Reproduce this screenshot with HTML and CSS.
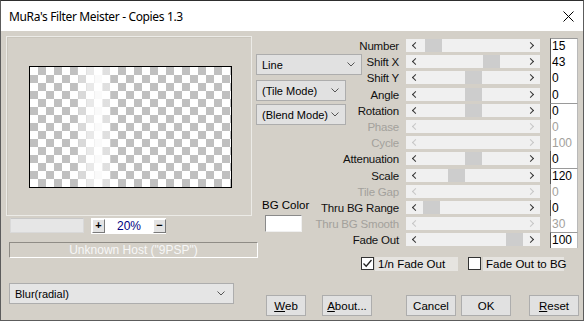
FILE: index.html
```html
<!DOCTYPE html>
<html>
<head>
<meta charset="utf-8">
<link rel="stylesheet" href="styles.css">
</head>
<body>
<div class="window">
  <div class="titlebar">
    <span class="title">MuRa's Filter Meister - Copies 1.3</span>
    <svg class="close" width="11" height="11" viewBox="0 0 11 11"><path d="M0.5 0.5L10.5 10.5M10.5 0.5L0.5 10.5" stroke="#000" stroke-width="1" fill="none"/></svg>
  </div>
  <div class="client">
    <div class="left">
      <div class="frame"><div class="preview"></div></div>
      <div class="zoomrow">
        <div class="progress"></div>
        <div class="zoombox"><span class="zbtn">+</span><span class="zval">20%</span><span class="zbtn">&minus;</span></div>
      </div>
      <div class="host">Unknown Host ("9PSP")</div>
      <div class="combo combo-filter"><span>Blur(radial)</span><svg class="chev" width="8" height="5" viewBox="0 0 8 5"><path d="M0.5 0.5L4 4L7.5 0.5" stroke="#555" fill="none"/></svg></div>
    </div>
    <div class="right">
      <div class="params">
        <div class="mid">
          <div class="combo combo-line"><span>Line</span><svg class="chev" width="8" height="5" viewBox="0 0 8 5"><path d="M0.5 0.5L4 4L7.5 0.5" stroke="#555" fill="none"/></svg></div>
          <div class="combo combo-tile"><span>(Tile Mode)</span><svg class="chev" width="8" height="5" viewBox="0 0 8 5"><path d="M0.5 0.5L4 4L7.5 0.5" stroke="#555" fill="none"/></svg></div>
          <div class="combo combo-blend"><span>(Blend Mode)</span><svg class="chev" width="8" height="5" viewBox="0 0 8 5"><path d="M0.5 0.5L4 4L7.5 0.5" stroke="#555" fill="none"/></svg></div>
          <div class="bglabel">BG Color</div>
          <div class="bgbox"></div>
        </div>
        <div class="rows">
          <div class="lbl">Number</div>
          <div class="cell"><div class="track"><span class="arr"></span><span class="chan"><span class="thumb" style="left:2px"></span></span><span class="arr"></span></div></div>
          <div class="box top">15</div>

          <div class="lbl">Shift X</div>
          <div class="cell"><div class="track"><span class="arr"></span><span class="chan"><span class="thumb" style="left:60px"></span></span><span class="arr"></span></div></div>
          <div class="box">43</div>

          <div class="lbl">Shift Y</div>
          <div class="cell"><div class="track"><span class="arr"></span><span class="chan"><span class="thumb" style="left:42px"></span></span><span class="arr"></span></div></div>
          <div class="box">0</div>

          <div class="lbl">Angle</div>
          <div class="cell"><div class="track"><span class="arr"></span><span class="chan"><span class="thumb" style="left:42px"></span></span><span class="arr"></span></div></div>
          <div class="box">0</div>

          <div class="lbl">Rotation</div>
          <div class="cell"><div class="track"><span class="arr"></span><span class="chan"><span class="thumb" style="left:42px"></span></span><span class="arr"></span></div></div>
          <div class="box top">0</div>

          <div class="lbl dis">Phase</div>
          <div class="cell"><div class="track dis"><span class="arr"></span><span class="chan"></span><span class="arr"></span></div></div>
          <div class="box dis">0</div>

          <div class="lbl dis">Cycle</div>
          <div class="cell"><div class="track dis"><span class="arr"></span><span class="chan"></span><span class="arr"></span></div></div>
          <div class="box dis">100</div>

          <div class="lbl">Attenuation</div>
          <div class="cell"><div class="track"><span class="arr"></span><span class="chan"><span class="thumb" style="left:42px"></span></span><span class="arr"></span></div></div>
          <div class="box">0</div>

          <div class="lbl">Scale</div>
          <div class="cell"><div class="track"><span class="arr"></span><span class="chan"><span class="thumb" style="left:25px"></span></span><span class="arr"></span></div></div>
          <div class="box top">120</div>

          <div class="lbl dis">Tile Gap</div>
          <div class="cell"><div class="track dis"><span class="arr"></span><span class="chan"></span><span class="arr"></span></div></div>
          <div class="box dis">0</div>

          <div class="lbl">Thru BG Range</div>
          <div class="cell"><div class="track"><span class="arr"></span><span class="chan"><span class="thumb" style="left:0px"></span></span><span class="arr"></span></div></div>
          <div class="box">0</div>

          <div class="lbl dis">Thru BG Smooth</div>
          <div class="cell"><div class="track dis"><span class="arr"></span><span class="chan"></span><span class="arr"></span></div></div>
          <div class="box dis">30</div>

          <div class="lbl">Fade Out</div>
          <div class="cell"><div class="track"><span class="arr"></span><span class="chan"><span class="thumb" style="left:83px"></span></span><span class="arr"></span></div></div>
          <div class="box top">100</div>
        </div>
      </div>
      <div class="checks">
        <label class="chk"><span class="cb"><svg width="11" height="11" viewBox="0 0 11 11"><path d="M1.5 5.5L4.2 8.2L9.5 2" stroke="#222" stroke-width="1.3" fill="none"/></svg></span><span class="ctext c1">1/n Fade Out</span></label>
        <label class="chk chk2"><span class="cb"></span><span class="ctext c2">Fade Out to BG</span></label>
      </div>
      <div class="buttons">
        <div class="btn b-web"><u>W</u>eb</div>
        <div class="btn b-about"><u>A</u>bout...</div>
        <div class="btn b-cancel">Cancel</div>
        <div class="btn b-ok">OK</div>
        <div class="btn b-reset"><u>R</u>eset</div>
      </div>
    </div>
  </div>
</div>
</body>
</html>
```
FILE: styles.css
```css
* { box-sizing: border-box; margin: 0; padding: 0; }
html, body { width: 584px; height: 321px; overflow: hidden; }
body {
  font-family: "Liberation Sans", Arial, sans-serif;
  font-size: 11px;
  color: #000;
  background: #d4d0c8;
}
.window {
  width: 584px;
  height: 321px;
  border: 1px solid #5c5c5c;
  border-top-color: #2e2e2e;
  background: #d4d0c8;
  display: flex;
  flex-direction: column;
}
.titlebar {
  height: 30px;
  flex: none;
  background: #fff;
  display: flex;
  align-items: center;
  justify-content: space-between;
  padding: 0 9px 0 8px;
}
.title {
  font-family: "Noto Sans", "Open Sans", sans-serif;
  font-size: 12px;
  color: #000;
  letter-spacing: -0.35px;
}
.close { display: block; margin-top: 1px; }

.client { flex: 1; display: flex; }

/* ---------- left ---------- */
.left { width: 255px; flex: none; display: flex; flex-direction: column; }
.frame {
  margin: 5px 0 0 5px;
  width: 246px;
  height: 180px;
  border: 1px solid #ecebe7;
  box-shadow: inset 1px 1px 0 #c9c5bc;
}
.preview {
  margin: 29px 0 0 22px;
  width: 203px;
  height: 122px;
  border: 1px solid #000;
  background:
    linear-gradient(90deg, rgba(255,255,255,0) 47px, rgba(255,255,255,.4) 49px, rgba(255,255,255,.4) 56px, rgba(255,255,255,.65) 57px, rgba(255,255,255,.65) 64px, rgba(255,255,255,.92) 65px, rgba(255,255,255,.92) 72px, rgba(255,255,255,.5) 73px, rgba(255,255,255,.5) 80px, rgba(255,255,255,0) 81px),
    repeating-conic-gradient(#c0c0c0 0 25%, #fff 0 50%) 0 0 / 16px 16px;
}
.zoomrow { display: flex; margin: 2px 0 0 9px; }
.progress {
  width: 74px; height: 15px;
  background: #e6e6e6;
  border: 1px solid #d9d9d9;
  border-top-color: #c8c8c8;
}
.zoombox {
  margin-left: 7px;
  width: 75px; height: 16px;
  background: #fff;
  display: flex;
  align-items: center;
  justify-content: space-between;
  padding: 0 0 0 1px;
}
.zbtn {
  width: 13px; height: 14px;
  background: #e3e3e3;
  border: 1px solid #fff;
  border-right-color: #7a7a7a;
  border-bottom-color: #7a7a7a;
  font-weight: bold;
  font-size: 11px;
  line-height: 11px;
  text-align: center;
}
.zval { color: #000080; font-size: 12px; }
.host {
  margin: 8px 0 0 8px;
  width: 249px; height: 16px;
  border: 1px solid #fff;
  border-top-color: #8f8c86;
  border-left-color: #8f8c86;
  color: #f7f7f7;
  text-align: center;
  font-size: 12px;
  line-height: 14px;
}
.combo {
  height: 21px;
  background: #e1e1e1;
  border: 1px solid #adadad;
  display: flex;
  align-items: center;
  justify-content: space-between;
  padding: 0 6px 0 5px;
  font-size: 11px;
  white-space: nowrap;
}
.chev { display: block; flex: none; }
.combo-filter { margin: 25px 0 0 8px; width: 225px; background: #e5e5e5; padding-right: 8px; }

/* ---------- right ---------- */
.right { flex: 1; display: flex; flex-direction: column; padding-top: 7px; }
.params { display: grid; }
.params > * { grid-area: 1 / 1; }
.mid {
  justify-self: start;
  align-self: start;
  display: flex;
  flex-direction: column;
  align-items: flex-start;
  padding-top: 16px;
}
.combo-line { width: 106px; }
.combo-tile { width: 90px; margin-top: 5px; }
.combo-blend { width: 90px; margin-top: 3px; }
.bglabel { margin: 73px 0 0 6px; line-height: 14px; font-size: 11.5px; }
.bgbox {
  margin: 3px 0 0 9px;
  width: 37px; height: 17px;
  background: #fff;
  border: 1px solid #8a8a8a;
  border-right-color: #f0f0f0;
  border-bottom-color: #f0f0f0;
}
.rows {
  display: grid;
  grid-template-columns: 150px 144px 28px;
  grid-template-rows: repeat(13, 16.2px);
}
.lbl {
  text-align: right;
  padding-right: 7px;
  white-space: nowrap;
  line-height: 16px;
  font-size: 11.5px;
  letter-spacing: -0.2px;
  color: #111;
}
.lbl.dis { color: #a3a19c; }
.dis { color: #a3a19c; }
.cell { display: flex; }
.track {
  width: 134px;
  height: 13px;
  margin-top: 1px;
  background: #f0f0f0;
  display: flex;
  color: #333;
}
.arr {
  width: 17px;
  flex: none;
  display: flex;
  align-items: center;
  justify-content: center;
}
.arr::before {
  content: "";
  width: 4px;
  height: 4px;
  border-left: 1.6px solid currentColor;
  border-bottom: 1.6px solid currentColor;
}
.arr:first-child::before { transform: translateX(1px) rotate(45deg); }
.arr:last-child::before { transform: translateX(-1px) rotate(-135deg); }
.track.dis { color: #c6c6c6; }
.chan { flex: 1; position: relative; }
.thumb {
  position: absolute;
  top: 0;
  width: 17px;
  height: 13px;
  background: #cdcdcd;
}
.box {
  background: #fff;
  border-left: 1px solid #555;
  border-right: 1px solid #b9b9b9;
  padding-left: 1px;
  font-size: 12px;
  line-height: 16px;
}
.box.top { border-top: 1px solid #9a9a9a; line-height: 14px; }
.box.dis { color: #a3a19c; border-left-color: #aaa; }

.checks { display: flex; margin: 8px 0 0 105px; height: 15px; }
.chk { display: flex; align-items: center; }
.chk2 { margin-left: 10px; }
.cb {
  width: 13px; height: 13px;
  background: #fff;
  border: 1px solid #333;
  display: flex;
  align-items: center;
  justify-content: center;
}
.cb svg { display: block; }
.ctext {
  height: 14px;
  background: #e6e4e0;
  padding-left: 3px;
  line-height: 14px;
  font-size: 11.5px;
  white-space: nowrap;
}
.c1 { width: 83px; margin-left: 1px; }
.c2 { width: 81px; margin-left: 2px; }

.buttons { display: flex; margin-top: 24px; }
.btn {
  height: 21px;
  background: #e1e1e1;
  border: 1px solid #adadad;
  display: flex;
  align-items: center;
  justify-content: center;
  font-size: 11.5px;
}
.b-web { width: 40px; margin-left: 10px; }
.b-about { width: 50px; margin-left: 16px; }
.b-cancel { width: 50px; margin-left: 34px; }
.b-ok { width: 50px; margin-left: 5px; }
.b-reset { width: 50px; margin-left: 18px; }
```
